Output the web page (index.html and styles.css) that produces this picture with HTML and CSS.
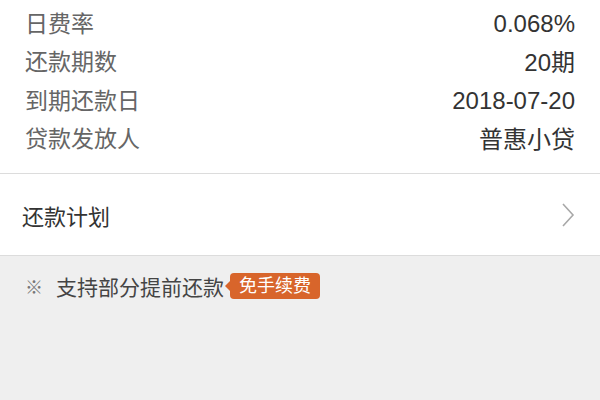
FILE: index.html
```html
<!DOCTYPE html>
<html>
<head>
<meta charset="utf-8">
<link rel="stylesheet" href="styles.css">
</head>
<body>
<div class="page">
  <div class="info">
    <div class="row"><span class="label">日费率</span><span class="value">0.068%</span></div>
    <div class="row"><span class="label">还款期数</span><span class="value">20期</span></div>
    <div class="row"><span class="label">到期还款日</span><span class="value">2018-07-20</span></div>
    <div class="row"><span class="label">贷款发放人</span><span class="value">普惠小贷</span></div>
  </div>
  <div class="plan">
    <span class="plan-title">还款计划</span>
    <svg class="chev" width="14" height="26" viewBox="0 0 14 26"><path d="M2 2 L12 13 L2 24" fill="none" stroke="#a8a8a8" stroke-width="1.6"/></svg>
  </div>
  <div class="notice">
    <span class="mark">※</span>
    <span class="ntext">支持部分提前还款</span>
    <span class="badge">免手续费</span>
  </div>
</div>
</body>
</html>
```
FILE: styles.css
```css
html, body {
  margin: 0;
  padding: 0;
}
body {
  width: 600px;
  height: 400px;
  overflow: hidden;
  background: #efefef;
  font-family: "Liberation Sans", "Noto Sans CJK SC", sans-serif;
}
.page {
  display: flex;
  flex-direction: column;
}
.info {
  background: #fff;
  padding: 5px 25px 14px 25px;
  border-bottom: 1px solid #dcdcdc;
}
.row {
  height: 38.5px;
  display: flex;
  align-items: center;
  justify-content: space-between;
  font-size: 23px;
  line-height: 1;
}
.label {
  color: #666;
}
.value {
  color: #333;
  font-size: 24px;
}
.plan {
  background: #fff;
  height: 81px;
  padding: 0 25px 0 22px;
  display: flex;
  align-items: center;
  justify-content: space-between;
  border-bottom: 1px solid #dcdcdc;
}
.plan-title {
  font-size: 22px;
  color: #333;
}
.chev {
  display: block;
  margin-top: 1px;
}
.notice {
  display: flex;
  align-items: center;
  padding: 16px 0 0 25px;
  height: 28px;
}
.mark {
  font-size: 18px;
  color: #777;
  width: 31px;
}
.ntext {
  font-size: 21px;
  color: #444;
}
.badge {
  position: relative;
  margin-left: 6px;
  background: #d8652b;
  color: #fff;
  font-size: 18px;
  height: 26px;
  line-height: 26px;
  padding: 0 9px;
  border-radius: 4px;
}
.badge::before {
  content: "";
  position: absolute;
  left: -5px;
  top: 8px;
  border-top: 5px solid transparent;
  border-bottom: 5px solid transparent;
  border-right: 5px solid #d8652b;
}
```
